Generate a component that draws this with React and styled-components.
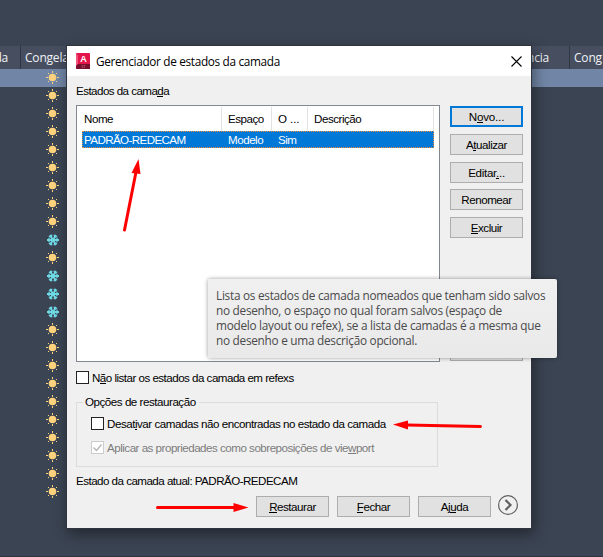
import React from "react";
import styled, { createGlobalStyle } from "styled-components";

const GlobalStyle = createGlobalStyle`
  *, *::before, *::after { box-sizing: border-box; }
  html, body { margin: 0; background: #3b4453; overflow: hidden; }
  u { text-decoration: none; box-shadow: inset 0 -1px 0 currentColor; }
`;

const uiFont = `"Open Sans", "Noto Sans", sans-serif`;

const Screen = styled.main`
  position: relative;
  width: 603px;
  height: 557px;
  overflow: hidden;
  background: #3b4453;
  border-bottom: 1px solid #30363f;
  padding-top: 46px;
  font-family: ${uiFont};
`;

const LayerHeader = styled.header`
  display: flex;
  justify-content: space-between;
  height: 23px;
  background: #464e60;
  color: #f1f2f5;
  font: 12px/24px ${uiFont};
  letter-spacing: -0.2px;
`;

const LayerColumns = styled.div`
  display: flex;
`;

const LayerColumn = styled.div`
  width: ${(p) => p.$width}px;
  overflow: hidden;
  padding: 0 ${(p) => p.$end || 0}px 0 ${(p) => (p.$end ? 0 : 4)}px;
  display: flex;
  justify-content: ${(p) => (p.$end ? "flex-end" : "flex-start")};
  white-space: nowrap;
  border-left: ${(p) => (p.$first ? "0" : "1px solid #303744")};
`;

const LayerRow = styled.div`
  height: 18px;
  padding-left: 46px;
  background: ${(p) => (p.$selected ? "#7186a6" : "transparent")};
  svg { display: block; }
`;

const Dialog = styled.section`
  position: absolute;
  left: 66px;
  top: 45px;
  width: 466px;
  height: 484px;
  border: 1px solid #30353d;
  background: #f0f0f0;
  box-shadow: 2px 5px 13px rgba(0, 0, 0, 0.42);
  color: #000;
`;

const TitleBar = styled.div`
  display: flex;
  align-items: center;
  height: 30px;
  padding: 0 9px 0 9px;
  background: #fff;
`;

const Title = styled.h1`
  flex: 1;
  margin: 0 0 0 6px;
  font: 400 11.8px/30px ${uiFont};
  letter-spacing: -0.33px;
  color: #000;
`;

const Body = styled.div`
  padding: 8px 8px 0 9px;
`;

const Text = styled.span`
  display: block;
  font: 11.6px/14px "Liberation Sans", Arial, sans-serif;
  letter-spacing: ${(p) => p.$spacing || -0.47}px;
  white-space: nowrap;
  color: ${(p) => (p.$muted ? "#7c7c7c" : "inherit")};
`;

const Columns = styled.div`
  display: flex;
  gap: 10px;
  margin-top: 7px;
`;

const List = styled.div`
  width: 364px;
  height: 257px;
  padding: 1px 5px;
  border: 1px solid #828790;
  background: #fff;
`;

const ListRow = styled.div`
  display: grid;
  grid-template-columns: 140px 50px 36px 1fr;
  width: 352px;
  height: 17px;
  align-items: center;
  background: #0078d7;
  outline: 1px dotted #e8903c;
  outline-offset: -1px;
  color: #fff;
`;

const ListHeader = styled(ListRow)`
  height: 24px;
  background: #fff;
  outline: 0;
  color: #000;
`;

const Cell = styled.div`
  height: 100%;
  display: flex;
  align-items: center;
  padding-left: ${(p) => (p.$first ? 2 : 6)}px;
  border-right: ${(p) => (p.$ruled ? "1px solid #e2e2e2" : "0")};
`;

const Actions = styled.div`
  display: flex;
  flex-direction: column;
  padding-top: 1px;
`;

const Button = styled.button`
  width: 73px;
  height: 21px;
  margin: 0 0 ${(p) => p.$after || 0}px;
  padding: 1px 0 0;
  display: flex;
  align-items: center;
  justify-content: center;
  border: ${(p) => (p.$primary ? "2px solid #0078d7" : "1px solid #adadad")};
  background: #e1e1e1;
  color: #000;
`;

const CheckRow = styled.label`
  display: flex;
  align-items: center;
  gap: 3px;
  height: 13px;
  margin-top: ${(p) => p.$before}px;
`;

const Box = styled.span`
  width: 13px;
  height: 13px;
  flex: none;
  border: 1px solid ${(p) => (p.$muted ? "#cccccc" : "#222")};
  background: #fff;
  svg { display: block; }
`;

const Group = styled.fieldset`
  width: 362px;
  height: 72px;
  margin: 11px 0 7px;
  padding: 8px 0 0 14px;
  border: 1px solid #dcdcdc;
  min-width: 0;
`;

const Legend = styled.legend`
  height: 14px;
  margin-left: -8px;
  padding: 0 3px 0 2px;
`;

const Footer = styled.footer`
  display: flex;
  align-items: center;
  gap: 8px;
  height: 21px;
  margin: 8px 0 0 180px;
`;

const Expand = styled.svg`
  margin: -3px 0 0 -2px;
`;

const Tooltip = styled.div`
  position: absolute;
  left: 208px;
  top: 279px;
  width: 349px;
  height: 79px;
  padding: 9px 8px;
  border-radius: 2px;
  background: linear-gradient(#f0f0f0, #e9e9e9);
  box-shadow: 0 0 4px rgba(0, 0, 0, 0.4);
  color: #4a4a4a;
  font: 11.8px/15px ${uiFont};
  letter-spacing: -0.27px;
  white-space: nowrap;
`;

const TipLine = styled.div``;

const Annotations = styled.svg`
  position: absolute;
  inset: 0;
  pointer-events: none;
`;

const Sun = () => (
  <svg width="13" height="18" viewBox="0 0 13 18">
    <circle cx="6.5" cy="8.5" r="3.8" fill="#ffd27d" />
    <path d="M6.5 2v2M6.5 13v2M0 8.5h2M11 8.5h2" stroke="#ffd27d" />
    <path d="M2 4h1v1h-1zM10 4h1v1h-1zM2 12h1v1h-1zM10 12h1v1h-1z" fill="#ffd27d" />
  </svg>
);

const Flake = () => (
  <svg width="13" height="18" viewBox="0 0 13 18">
    <g stroke="#6fd9e6" strokeWidth="1.8" fill="none">
      <path d="M1 9h12M4 4l6 10M10 4l-6 10" />
      <path d="M2.5 7.2l1.7 1.8l-1.7 1.8M11.5 7.2l-1.7 1.8l1.7 1.8M2.8 5.6l2.4 .4l.7-2.3M11.2 5.6l-2.4 .4l-.7-2.3M2.8 12.4l2.4-.4l.7 2.3M11.2 12.4l-2.4-.4l-.7 2.3" strokeWidth="1.3" />
    </g>
  </svg>
);

const Logo = styled.svg`
  margin-top: -1px;
`;

const AppLogo = () => (
  <Logo width="14" height="16" viewBox="0 0 14 16">
    <path d="M1 0h12a1 1 0 0 1 1 1v15H1a1 1 0 0 1-1-1V1a1 1 0 0 1 1-1z" fill="#e4154b" />
    <path d="M0 1l2 1v9l-2 2z" fill="#f2557c" />
    <path d="M0 13l2-2h12v4.5a.5 .5 0 0 1-.5 .5H1a1 1 0 0 1-1-1z" fill="#7a0c2c" />
    <text x="7.6" y="9" textAnchor="middle" fill="#fff" fontFamily="Liberation Sans, sans-serif" fontWeight="700" fontSize="9">A</text>
    <text x="7.6" y="15" textAnchor="middle" fill="#d896a8" fontFamily="Liberation Sans, sans-serif" fontSize="3.5">LT</text>
  </Logo>
);

const frozen = new Set([9, 11, 12, 13]);
const layers = Array.from({ length: 24 }, (_, i) => frozen.has(i));

export default function App() {
  return (
    <>
      <GlobalStyle />
      <Screen>
        <LayerHeader>
          <LayerColumns>
            <LayerColumn $width={20} $end={12} $first>da</LayerColumn>
            <LayerColumn $width={60}>Congelar</LayerColumn>
          </LayerColumns>
          <LayerColumns>
            <LayerColumn $width={69} $end={20} $first>ência</LayerColumn>
            <LayerColumn $width={34}>Cong</LayerColumn>
          </LayerColumns>
        </LayerHeader>
        {layers.map((isFrozen, i) => (
          <LayerRow key={i} $selected={i === 0}>{isFrozen ? <Flake /> : <Sun />}</LayerRow>
        ))}

        <Dialog>
          <TitleBar>
            <AppLogo />
            <Title>Gerenciador de estados da camada</Title>
            <svg width="11" height="11" viewBox="0 0 11 11">
              <path d="M.5 .5l10 10M10.5 .5l-10 10" stroke="#000" strokeWidth="1.1" />
            </svg>
          </TitleBar>
          <Body>
            <Text $spacing={-0.55}>Estados da cama<u>d</u>a</Text>
            <Columns>
              <List>
                <ListHeader>
                  <Cell $first $ruled><Text>Nome</Text></Cell>
                  <Cell $ruled><Text>Espaço</Text></Cell>
                  <Cell $ruled><Text $spacing={-0.1}>O ...</Text></Cell>
                  <Cell $ruled><Text>Descrição</Text></Cell>
                </ListHeader>
                <ListRow>
                  <Cell $first><Text $spacing={-0.6}>PADRÃO-REDECAM</Text></Cell>
                  <Cell><Text>Modelo</Text></Cell>
                  <Cell><Text>Sim</Text></Cell>
                </ListRow>
              </List>
              <Actions>
                <Button $primary $after={7}><Text $spacing={-0.2}>N<u>o</u>vo...</Text></Button>
                <Button $after={7}><Text>A<u>t</u>ualizar</Text></Button>
                <Button $after={6}><Text $spacing={-0.3}>Editar<u>.</u>..</Text></Button>
                <Button $after={7}><Text>Renomear</Text></Button>
                <Button $after={102}><Text><u>E</u>xcluir</Text></Button>
                <Button />
              </Actions>
            </Columns>
            <CheckRow $before={9}><Box /><Text $spacing={-0.52}>N<u>ã</u>o listar os estados da camada em refexs</Text></CheckRow>
            <Group>
              <Legend><Text>Opções de restauração</Text></Legend>
              <CheckRow $before={0}><Box /><Text>Desat<u>i</u>var camadas não encontradas no estado da camada</Text></CheckRow>
              <CheckRow $before={11}>
                <Box $muted>
                  <svg width="11" height="11" viewBox="0 0 11 11"><path d="M1.5 5.5l3 3l5-6" fill="none" stroke="#b5b5b5" strokeWidth="1.4" /></svg>
                </Box>
                <Text $muted $spacing={-0.5}>Aplicar as propriedades como sobreposições de vie<u>w</u>port</Text>
              </CheckRow>
            </Group>
            <Text $spacing={-0.53}>Estado da camada atual: PADRÃO-REDECAM</Text>
            <Footer>
              <Button><Text><u>R</u>estaurar</Text></Button>
              <Button><Text><u>F</u>echar</Text></Button>
              <Button><Text>Aj<u>u</u>da</Text></Button>
              <Expand width="22" height="22" viewBox="0 0 22 22">
                <circle cx="11" cy="11" r="9.4" fill="none" stroke="#606060" strokeWidth="1.2" />
                <path d="M8.5 6l5 5l-5 5" fill="none" stroke="#606060" strokeWidth="2.2" />
              </Expand>
            </Footer>
          </Body>
        </Dialog>

        <Tooltip>
          <TipLine>Lista os estados de camada nomeados que tenham sido salvos</TipLine>
          <TipLine>no desenho, o espaço no qual foram salvos (espaço de</TipLine>
          <TipLine>modelo layout ou refex), se a lista de camadas é a mesma que</TipLine>
          <TipLine>no desenho e uma descrição opcional.</TipLine>
        </Tooltip>

        <Annotations width="603" height="557" viewBox="0 0 603 557">
          <g stroke="#f00" strokeWidth="3" strokeLinecap="round" fill="#f00">
            <path d="M124.5 230L136 172M480.5 426.5L407 425M157.5 507.5H235" />
            <path stroke="none" d="M138.5 159l-7 14l9 1zM393 424.5l15-4v9zM248.5 507.5l-15-4.5v9z" />
          </g>
        </Annotations>
      </Screen>
    </>
  );
}
